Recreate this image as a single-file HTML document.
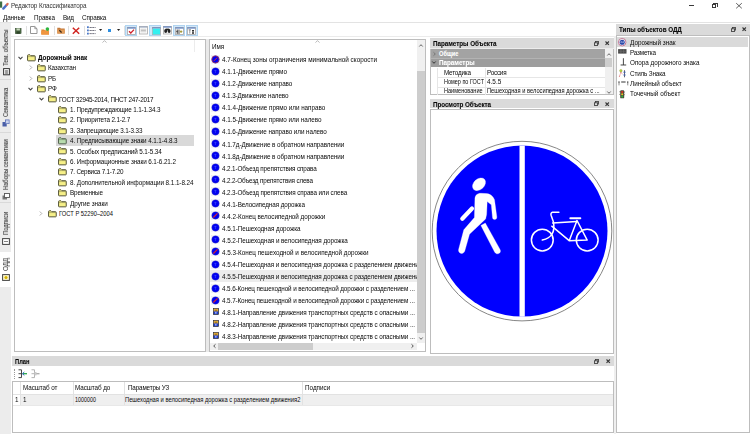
<!DOCTYPE html>
<html><head><meta charset="utf-8">
<style>
*{margin:0;padding:0;box-sizing:border-box}
html,body{width:750px;height:434px;overflow:hidden;background:#fff}
body{position:relative;font-family:"Liberation Sans",sans-serif;font-size:6.2px;color:#0a0a0a}
.a{position:absolute}
.t{position:absolute;white-space:nowrap;line-height:10px;height:10px;will-change:transform}
.b{font-weight:bold;-webkit-text-stroke:0.08px currentColor}
.vt{position:absolute;transform-origin:0 0;transform:rotate(-90deg);white-space:nowrap;line-height:7px;color:#2a2a2a;-webkit-text-stroke:0.05px currentColor;will-change:transform}
svg{overflow:visible}
</style></head><body>
<svg class="a" style="left:0.00px;top:0.00px" width="12" height="12" viewBox="0 0 12 12"><rect x="0" y="1.5" width="2.2" height="6.2" fill="#3f6f45"/><path d="M3.3 8.6 L6.6 5.0" stroke="#4a70c8" stroke-width="2.4" stroke-linecap="round"/><path d="M6.8 4.8 L7.6 3.9" stroke="#d86a50" stroke-width="2.2" stroke-linecap="round"/></svg>
<div class="t" style="left:11.00px;top:1.40px;font-size:6.32px;letter-spacing:-0.113px;color:#333">Редактор Классификатора</div>
<div class="a" style="left:688.70px;top:5.00px;width:5.30px;height:0.90px;background:#3a3a3a;"></div>
<div class="a" style="left:711.8px;top:3.6px;width:4.6px;height:4.2px;border:0.9px solid #3a3a3a"></div>
<div class="a" style="left:713.2px;top:2.5px;width:4.6px;height:4.2px;border-top:0.9px solid #3a3a3a;border-right:0.9px solid #3a3a3a"></div>
<svg class="a" style="left:736.00px;top:2.50px" width="6" height="5.5" viewBox="0 0 6 5.5"><path d="M0.2 0.2L5.8 5.3M5.8 0.2L0.2 5.3" stroke="#3a3a3a" stroke-width="0.8"/></svg>
<div class="t" style="left:3.00px;top:12.60px;font-size:6.32px;letter-spacing:-0.090px">Данные</div>
<div class="t" style="left:33.80px;top:12.60px;font-size:6.32px;letter-spacing:-0.073px">Правка</div>
<div class="t" style="left:63.00px;top:12.60px;font-size:6.32px;letter-spacing:-0.223px">Вид</div>
<div class="t" style="left:82.00px;top:12.60px;font-size:6.32px;letter-spacing:-0.084px">Справка</div>
<div class="a" style="left:0.00px;top:22.00px;width:750.00px;height:1.00px;background:#e3e3e3;"></div>
<div class="a" style="left:11.00px;top:36.30px;width:605.00px;height:0.80px;background:#ebebeb;"></div>
<div class="a" style="left:0.00px;top:23.00px;width:11.00px;height:411.00px;background:#ececec;"></div>
<div class="a" style="left:0.00px;top:251.80px;width:11.00px;height:35.20px;background:#ffffff;"></div>
<div class="vt" style="left:2.0px;top:65.6px;font-size:6.32px;transform:rotate(-90deg) scaleX(0.9256)">Тем. объекты</div>
<div class="vt" style="left:2.0px;top:117.2px;font-size:6.32px;transform:rotate(-90deg) scaleX(0.9051)">Семантика</div>
<div class="vt" style="left:2.0px;top:189.7px;font-size:6.32px;transform:rotate(-90deg) scaleX(0.9098)">Наборы семантики</div>
<div class="vt" style="left:2.0px;top:235.0px;font-size:6.32px;transform:rotate(-90deg) scaleX(0.9225)">Подписи</div>
<div class="vt" style="left:2.0px;top:271.0px;font-size:6.32px;transform:rotate(-90deg) scaleX(0.9747)">ОДД</div>
<div class="a" style="left:0.00px;top:79.00px;width:11.00px;height:0.80px;background:#d9d9d9;"></div>
<div class="a" style="left:0.00px;top:131.70px;width:11.00px;height:0.80px;background:#d9d9d9;"></div>
<div class="a" style="left:0.00px;top:202.40px;width:11.00px;height:0.80px;background:#d9d9d9;"></div>
<svg class="a" style="left:2.60px;top:67.80px" width="7" height="7.4" viewBox="0 0 7 7.4"><rect x="0.6" y="0.6" width="5.8" height="6.2" fill="#fff" stroke="#333" stroke-width="1.0"/><path d="M2.4 2v4.2M3.5 2v4.2M4.6 2v4.2" stroke="#555" stroke-width="0.6"/></svg>
<svg class="a" style="left:2.00px;top:119.30px" width="8" height="8" viewBox="0 0 8 8"><rect x="0.5" y="3" width="4.2" height="4.5" fill="#4a5fa8"/><rect x="3" y="0.5" width="4.5" height="4.5" fill="#5b6fb5"/><rect x="3.8" y="1.3" width="3" height="3" fill="#c9d3ee"/></svg>
<svg class="a" style="left:2.00px;top:192.50px" width="8" height="7" viewBox="0 0 8 7"><rect x="0.5" y="2.5" width="4.5" height="4" fill="#777"/><rect x="2.5" y="0.5" width="5" height="4" fill="#fff" stroke="#555" stroke-width="0.9"/></svg>
<svg class="a" style="left:2.00px;top:238.00px" width="8" height="7" viewBox="0 0 8 7"><rect x="0.6" y="0.6" width="6.8" height="5.8" fill="#fff" stroke="#444" stroke-width="1"/><path d="M2 3.5h4" stroke="#666" stroke-width="0.8"/></svg>
<svg class="a" style="left:1.50px;top:274.00px" width="8" height="7" viewBox="0 0 8 7"><rect x="0.6" y="0.6" width="6.8" height="5.8" fill="#fffbd0" stroke="#444" stroke-width="1"/><circle cx="4" cy="3.5" r="1.6" fill="#d6b400"/></svg>
<svg class="a" style="left:15.00px;top:28.00px" width="6.4" height="6" viewBox="0 0 6.4 6"><rect x="0.3" y="0.3" width="5.8" height="5.4" fill="#4d6b45" stroke="#34492f" stroke-width="0.5"/><rect x="1.5" y="0.4" width="3.4" height="2" fill="#c8d8bc"/><rect x="1.5" y="3.4" width="3.4" height="2.3" fill="#2e4529"/></svg>
<div class="a" style="left:26.10px;top:26.00px;width:0.80px;height:9.00px;background:#e0e0e0;"></div>
<div class="a" style="left:53.90px;top:26.00px;width:0.80px;height:9.00px;background:#e0e0e0;"></div>
<div class="a" style="left:68.30px;top:26.00px;width:0.80px;height:9.00px;background:#e0e0e0;"></div>
<div class="a" style="left:84.30px;top:26.00px;width:0.80px;height:9.00px;background:#e0e0e0;"></div>
<div class="a" style="left:123.60px;top:26.00px;width:0.80px;height:9.00px;background:#e0e0e0;"></div>
<svg class="a" style="left:29.90px;top:26.40px" width="7.5" height="8" viewBox="0 0 7.5 8"><path d="M0.5 0.5H4.8L7 2.7V7.5H0.5Z" fill="#fff" stroke="#8a8a8a" stroke-width="0.9"/><path d="M4.8 0.5V2.7H7" fill="none" stroke="#8a8a8a" stroke-width="0.8"/></svg>
<svg class="a" style="left:41.40px;top:26.50px" width="9" height="8" viewBox="0 0 9 8"><path d="M0.3 2.5H3L3.8 3.3H8V7.6H0.3Z" fill="#e58a35"/><rect x="0.3" y="4" width="7.7" height="3.6" fill="#f0963f"/><circle cx="6.4" cy="2.1" r="1.8" fill="#2fb53e"/></svg>
<svg class="a" style="left:57.00px;top:27.40px" width="8" height="7" viewBox="0 0 8 7"><path d="M0.3 0.8H3L3.8 1.6H7.7V6.6H0.3Z" fill="#c47838"/><rect x="0.3" y="2.6" width="7.4" height="4" fill="#e39c58"/><path d="M2.3 3.3L4.6 5.4" stroke="#3a2a1a" stroke-width="1.3"/></svg>
<svg class="a" style="left:72.00px;top:27.00px" width="8" height="7.5" viewBox="0 0 8 7.5"><path d="M0.8 0.8L7.2 6.7M7.2 0.8L0.8 6.7" stroke="#d0231f" stroke-width="1.5"/></svg>
<svg class="a" style="left:86.80px;top:26.00px" width="9" height="9" viewBox="0 0 9 9"><rect x="0" y="0.3" width="1.8" height="1.8" fill="#4a78c8"/><rect x="0" y="3.5" width="1.8" height="1.8" fill="#4a78c8"/><rect x="0" y="6.7" width="1.8" height="1.8" fill="#4a78c8"/><path d="M2.6 1.5H8.5M2.6 4.5H8.5M2.6 7.6H8.5" stroke="#445" stroke-width="0.9" stroke-dasharray="1.2 0.6"/></svg>
<svg class="a" style="left:98.90px;top:29.20px" width="3.2" height="2" viewBox="0 0 3.2 2"><path d="M0 0H3.2L1.6 2Z" fill="#222"/></svg>
<div class="a" style="left:108.00px;top:29.00px;width:2.80px;height:2.80px;background:#2d8ee0;"></div>
<svg class="a" style="left:116.80px;top:29.20px" width="3.2" height="2" viewBox="0 0 3.2 2"><path d="M0 0H3.2L1.6 2Z" fill="#222"/></svg>
<div class="a" style="left:125.2px;top:25px;width:12.0px;height:10.8px;background:#d2e7f8;border:0.8px solid #b0d4f1"></div>
<div class="a" style="left:149.2px;top:25px;width:11.6px;height:10.8px;background:#d2e7f8;border:0.8px solid #b0d4f1"></div>
<div class="a" style="left:173.2px;top:25px;width:12.2px;height:10.8px;background:#d2e7f8;border:0.8px solid #b0d4f1"></div>
<div class="a" style="left:185.6px;top:25px;width:12.1px;height:10.8px;background:#d2e7f8;border:0.8px solid #b0d4f1"></div>
<svg class="a" style="left:127.20px;top:27.00px" width="8.8" height="7.8" viewBox="0 0 8.8 7.8"><rect x="0.4" y="0.4" width="8.0" height="7.0" fill="#fff" stroke="#a8a8a8" stroke-width="0.8"/><rect x="0.4" y="0.4" width="8.0" height="1.2" fill="#5c7fc0"/><path d="M2 4.2L3.8 6L7 2.6" fill="none" stroke="#d2202a" stroke-width="1.3"/></svg>
<svg class="a" style="left:139.20px;top:26.40px" width="8.8" height="8.4" viewBox="0 0 8.8 8.4"><rect x="0.4" y="0.4" width="8.0" height="7.6" fill="#fff" stroke="#a8a8a8" stroke-width="0.8"/><rect x="0.4" y="0.4" width="8.0" height="1.2" fill="#9aa8c0"/><rect x="1.5" y="2.6" width="5.8" height="3.8" fill="#dcdcdc"/><path d="M2 4.4H6.8" stroke="#aaa" stroke-width="0.6"/></svg>
<svg class="a" style="left:151.60px;top:27.00px" width="8.8" height="7.8" viewBox="0 0 8.8 7.8"><rect x="0.4" y="0.4" width="8.0" height="7.0" fill="#fff" stroke="#a8a8a8" stroke-width="0.8"/><rect x="0.4" y="0.4" width="8.0" height="1.2" fill="#5c7fc0"/><rect x="0.8" y="1.7" width="7.2" height="5.7" fill="#33f0f0"/></svg>
<svg class="a" style="left:163.20px;top:26.40px" width="8.8" height="8.4" viewBox="0 0 8.8 8.4"><rect x="0.4" y="0.4" width="8.0" height="7.6" fill="#fff" stroke="#a8a8a8" stroke-width="0.8"/><rect x="0.4" y="0.4" width="8.0" height="1.2" fill="#5c7fc0"/><ellipse cx="2.7" cy="5.1" rx="1.5" ry="2" fill="#222"/><ellipse cx="6.1" cy="5.1" rx="1.5" ry="2" fill="#222"/><rect x="2.6" y="2.6" width="3.6" height="1.8" fill="#222"/></svg>
<svg class="a" style="left:175.20px;top:27.00px" width="8.8" height="7.8" viewBox="0 0 8.8 7.8"><rect x="0.4" y="0.4" width="8.0" height="7.0" fill="#fff" stroke="#a8a8a8" stroke-width="0.8"/><rect x="0.4" y="0.4" width="8.0" height="1.2" fill="#5c7fc0"/><path d="M2.2 2.5V7M4 2.5V7" stroke="#333" stroke-width="0.9"/><path d="M1 4.5L2.6 3.6V5.4Z" fill="#333"/><circle cx="6.1" cy="4.6" r="1.2" fill="#a79c3a"/></svg>
<svg class="a" style="left:187.40px;top:27.10px" width="8.8" height="7.8" viewBox="0 0 8.8 7.8"><rect x="0.4" y="0.4" width="8.0" height="7.0" fill="#fff" stroke="#a8a8a8" stroke-width="0.8"/><rect x="0.4" y="0.4" width="8.0" height="1.2" fill="#5c7fc0"/><path d="M1.6 2.8H4M2.8 2.8V6.6" stroke="#777" stroke-width="0.8"/><rect x="5" y="3" width="2" height="1.6" fill="#333"/><rect x="5" y="5.2" width="2" height="1.6" fill="#333"/></svg>
<div class="a" style="left:205.20px;top:39.20px;width:4.40px;height:313.00px;background:#e9e9e9;"></div>
<div class="a" style="left:13.60px;top:39.20px;width:192.80px;height:313.00px;border:1px solid #bdbdbd;background:#fff"></div>
<div class="a" style="left:194.00px;top:40.20px;width:0.80px;height:12.00px;background:#ececec;"></div>
<svg class="a" style="left:102.00px;top:40.00px" width="5" height="3" viewBox="0 0 5 3"><path d="M0.5 2.6L2.5 0.6L4.5 2.6" fill="none" stroke="#999" stroke-width="0.7"/></svg>
<div class="a" style="left:55.80px;top:135.10px;width:138.20px;height:10.60px;background:#d9d9d9;"></div>
<svg class="a" style="left:17.50px;top:55.50px" width="5" height="4" viewBox="0 0 5 4"><path d="M0.5 0.9L2.5 2.9L4.5 0.9" fill="none" stroke="#484848" stroke-width="1.1"/></svg>
<svg class="a" style="left:26.50px;top:53.80px" width="8.8" height="7.4" viewBox="0 0 8.8 7.4"><path d="M0.55 1.6Q0.55 0.8 1.3 0.8H3L3.9 1.7H7.6Q8.25 1.7 8.25 2.4V6.2Q8.25 6.85 7.6 6.85H1.2Q0.55 6.85 0.55 6.2Z" fill="#f6f088" stroke="#55553a" stroke-width="1.0" stroke-linejoin="round"/><path d="M0.8 2.6H8" stroke="#55553a" stroke-width="0.4"/></svg>
<div class="t b" style="left:38.10px;top:52.90px;font-size:6.33px">Дорожный знак</div>
<svg class="a" style="left:28.55px;top:65.41px" width="4" height="5" viewBox="0 0 4 5"><path d="M0.8 0.5L2.8 2.5L0.8 4.5" fill="none" stroke="#9a9a9a" stroke-width="0.8"/></svg>
<svg class="a" style="left:37.15px;top:64.21px" width="8.8" height="7.4" viewBox="0 0 8.8 7.4"><path d="M0.55 1.6Q0.55 0.8 1.3 0.8H3L3.9 1.7H7.6Q8.25 1.7 8.25 2.4V6.2Q8.25 6.85 7.6 6.85H1.2Q0.55 6.85 0.55 6.2Z" fill="#f6f088" stroke="#55553a" stroke-width="1.0" stroke-linejoin="round"/><path d="M0.8 2.6H8" stroke="#55553a" stroke-width="0.4"/></svg>
<div class="t" style="left:48.45px;top:63.31px;font-size:6.32px;letter-spacing:-0.193px">Казахстан</div>
<svg class="a" style="left:28.55px;top:75.82px" width="4" height="5" viewBox="0 0 4 5"><path d="M0.8 0.5L2.8 2.5L0.8 4.5" fill="none" stroke="#9a9a9a" stroke-width="0.8"/></svg>
<svg class="a" style="left:37.15px;top:74.62px" width="8.8" height="7.4" viewBox="0 0 8.8 7.4"><path d="M0.55 1.6Q0.55 0.8 1.3 0.8H3L3.9 1.7H7.6Q8.25 1.7 8.25 2.4V6.2Q8.25 6.85 7.6 6.85H1.2Q0.55 6.85 0.55 6.2Z" fill="#f6f088" stroke="#55553a" stroke-width="1.0" stroke-linejoin="round"/><path d="M0.8 2.6H8" stroke="#55553a" stroke-width="0.4"/></svg>
<div class="t" style="left:48.45px;top:73.72px;font-size:6.32px;letter-spacing:-0.212px">РБ</div>
<svg class="a" style="left:28.15px;top:86.73px" width="5" height="4" viewBox="0 0 5 4"><path d="M0.5 0.9L2.5 2.9L4.5 0.9" fill="none" stroke="#484848" stroke-width="1.1"/></svg>
<svg class="a" style="left:37.15px;top:85.03px" width="8.8" height="7.4" viewBox="0 0 8.8 7.4"><path d="M0.55 1.6Q0.55 0.8 1.3 0.8H3L3.9 1.7H7.6Q8.25 1.7 8.25 2.4V6.2Q8.25 6.85 7.6 6.85H1.2Q0.55 6.85 0.55 6.2Z" fill="#f6f088" stroke="#55553a" stroke-width="1.0" stroke-linejoin="round"/><path d="M0.8 2.6H8" stroke="#55553a" stroke-width="0.4"/></svg>
<div class="t" style="left:48.45px;top:84.13px;font-size:6.32px;letter-spacing:-0.227px">РФ</div>
<svg class="a" style="left:38.80px;top:97.14px" width="5" height="4" viewBox="0 0 5 4"><path d="M0.5 0.9L2.5 2.9L4.5 0.9" fill="none" stroke="#484848" stroke-width="1.1"/></svg>
<svg class="a" style="left:47.80px;top:95.44px" width="8.8" height="7.4" viewBox="0 0 8.8 7.4"><path d="M0.55 1.6Q0.55 0.8 1.3 0.8H3L3.9 1.7H7.6Q8.25 1.7 8.25 2.4V6.2Q8.25 6.85 7.6 6.85H1.2Q0.55 6.85 0.55 6.2Z" fill="#f6f088" stroke="#55553a" stroke-width="1.0" stroke-linejoin="round"/><path d="M0.8 2.6H8" stroke="#55553a" stroke-width="0.4"/></svg>
<div class="t" style="left:59.10px;top:94.54px;font-size:6.32px;letter-spacing:-0.218px">ГОСТ 32945-2014, ПНСТ 247-2017</div>
<svg class="a" style="left:58.45px;top:105.85px" width="8.8" height="7.4" viewBox="0 0 8.8 7.4"><path d="M0.55 1.6Q0.55 0.8 1.3 0.8H3L3.9 1.7H7.6Q8.25 1.7 8.25 2.4V6.2Q8.25 6.85 7.6 6.85H1.2Q0.55 6.85 0.55 6.2Z" fill="#f6f088" stroke="#55553a" stroke-width="1.0" stroke-linejoin="round"/><path d="M0.8 2.6H8" stroke="#55553a" stroke-width="0.4"/></svg>
<div class="t" style="left:69.75px;top:104.95px;font-size:6.32px;letter-spacing:-0.134px">1. Предупреждающие 1.1-1.34.3</div>
<svg class="a" style="left:58.45px;top:116.26px" width="8.8" height="7.4" viewBox="0 0 8.8 7.4"><path d="M0.55 1.6Q0.55 0.8 1.3 0.8H3L3.9 1.7H7.6Q8.25 1.7 8.25 2.4V6.2Q8.25 6.85 7.6 6.85H1.2Q0.55 6.85 0.55 6.2Z" fill="#f6f088" stroke="#55553a" stroke-width="1.0" stroke-linejoin="round"/><path d="M0.8 2.6H8" stroke="#55553a" stroke-width="0.4"/></svg>
<div class="t" style="left:69.75px;top:115.36px;font-size:6.32px;letter-spacing:-0.138px">2. Приоритета 2.1-2.7</div>
<svg class="a" style="left:58.45px;top:126.67px" width="8.8" height="7.4" viewBox="0 0 8.8 7.4"><path d="M0.55 1.6Q0.55 0.8 1.3 0.8H3L3.9 1.7H7.6Q8.25 1.7 8.25 2.4V6.2Q8.25 6.85 7.6 6.85H1.2Q0.55 6.85 0.55 6.2Z" fill="#f6f088" stroke="#55553a" stroke-width="1.0" stroke-linejoin="round"/><path d="M0.8 2.6H8" stroke="#55553a" stroke-width="0.4"/></svg>
<div class="t" style="left:69.75px;top:125.77px;font-size:6.32px;letter-spacing:-0.132px">3. Запрещающие  3.1-3.33</div>
<svg class="a" style="left:58.45px;top:137.08px" width="8.8" height="7.4" viewBox="0 0 8.8 7.4"><path d="M0.55 1.6Q0.55 0.8 1.3 0.8H3L3.9 1.7H7.6Q8.25 1.7 8.25 2.4V6.2Q8.25 6.85 7.6 6.85H1.2Q0.55 6.85 0.55 6.2Z" fill="#b8dcae" stroke="#4f5f4c" stroke-width="1.0" stroke-linejoin="round"/><path d="M0.8 2.6H8" stroke="#4f5f4c" stroke-width="0.4"/></svg>
<div class="t" style="left:69.75px;top:136.18px;font-size:6.32px;letter-spacing:-0.085px">4. Предписывающие знаки 4.1.1-4.8.3</div>
<svg class="a" style="left:58.45px;top:147.49px" width="8.8" height="7.4" viewBox="0 0 8.8 7.4"><path d="M0.55 1.6Q0.55 0.8 1.3 0.8H3L3.9 1.7H7.6Q8.25 1.7 8.25 2.4V6.2Q8.25 6.85 7.6 6.85H1.2Q0.55 6.85 0.55 6.2Z" fill="#f6f088" stroke="#55553a" stroke-width="1.0" stroke-linejoin="round"/><path d="M0.8 2.6H8" stroke="#55553a" stroke-width="0.4"/></svg>
<div class="t" style="left:69.75px;top:146.59px;font-size:6.32px;letter-spacing:-0.105px">5. Особых предписаний 5.1-5.34</div>
<svg class="a" style="left:58.45px;top:157.90px" width="8.8" height="7.4" viewBox="0 0 8.8 7.4"><path d="M0.55 1.6Q0.55 0.8 1.3 0.8H3L3.9 1.7H7.6Q8.25 1.7 8.25 2.4V6.2Q8.25 6.85 7.6 6.85H1.2Q0.55 6.85 0.55 6.2Z" fill="#f6f088" stroke="#55553a" stroke-width="1.0" stroke-linejoin="round"/><path d="M0.8 2.6H8" stroke="#55553a" stroke-width="0.4"/></svg>
<div class="t" style="left:69.75px;top:157.00px;font-size:6.32px;letter-spacing:-0.091px">6. Информационные знаки 6.1-6.21.2</div>
<svg class="a" style="left:58.45px;top:168.31px" width="8.8" height="7.4" viewBox="0 0 8.8 7.4"><path d="M0.55 1.6Q0.55 0.8 1.3 0.8H3L3.9 1.7H7.6Q8.25 1.7 8.25 2.4V6.2Q8.25 6.85 7.6 6.85H1.2Q0.55 6.85 0.55 6.2Z" fill="#f6f088" stroke="#55553a" stroke-width="1.0" stroke-linejoin="round"/><path d="M0.8 2.6H8" stroke="#55553a" stroke-width="0.4"/></svg>
<div class="t" style="left:69.75px;top:167.41px;font-size:6.32px;letter-spacing:-0.200px">7. Сервиса 7.1-7.20</div>
<svg class="a" style="left:58.45px;top:178.72px" width="8.8" height="7.4" viewBox="0 0 8.8 7.4"><path d="M0.55 1.6Q0.55 0.8 1.3 0.8H3L3.9 1.7H7.6Q8.25 1.7 8.25 2.4V6.2Q8.25 6.85 7.6 6.85H1.2Q0.55 6.85 0.55 6.2Z" fill="#f6f088" stroke="#55553a" stroke-width="1.0" stroke-linejoin="round"/><path d="M0.8 2.6H8" stroke="#55553a" stroke-width="0.4"/></svg>
<div class="t" style="left:69.75px;top:177.82px;font-size:6.32px;letter-spacing:-0.056px">8. Дополнительной информации 8.1.1-8.24</div>
<svg class="a" style="left:58.45px;top:189.13px" width="8.8" height="7.4" viewBox="0 0 8.8 7.4"><path d="M0.55 1.6Q0.55 0.8 1.3 0.8H3L3.9 1.7H7.6Q8.25 1.7 8.25 2.4V6.2Q8.25 6.85 7.6 6.85H1.2Q0.55 6.85 0.55 6.2Z" fill="#f6f088" stroke="#55553a" stroke-width="1.0" stroke-linejoin="round"/><path d="M0.8 2.6H8" stroke="#55553a" stroke-width="0.4"/></svg>
<div class="t" style="left:69.75px;top:188.23px;font-size:6.32px;letter-spacing:-0.138px">Временные</div>
<svg class="a" style="left:58.45px;top:199.54px" width="8.8" height="7.4" viewBox="0 0 8.8 7.4"><path d="M0.55 1.6Q0.55 0.8 1.3 0.8H3L3.9 1.7H7.6Q8.25 1.7 8.25 2.4V6.2Q8.25 6.85 7.6 6.85H1.2Q0.55 6.85 0.55 6.2Z" fill="#f6f088" stroke="#55553a" stroke-width="1.0" stroke-linejoin="round"/><path d="M0.8 2.6H8" stroke="#55553a" stroke-width="0.4"/></svg>
<div class="t" style="left:69.75px;top:198.64px;font-size:6.32px;letter-spacing:-0.030px">Другие знаки</div>
<svg class="a" style="left:39.20px;top:211.15px" width="4" height="5" viewBox="0 0 4 5"><path d="M0.8 0.5L2.8 2.5L0.8 4.5" fill="none" stroke="#9a9a9a" stroke-width="0.8"/></svg>
<svg class="a" style="left:47.80px;top:209.95px" width="8.8" height="7.4" viewBox="0 0 8.8 7.4"><path d="M0.55 1.6Q0.55 0.8 1.3 0.8H3L3.9 1.7H7.6Q8.25 1.7 8.25 2.4V6.2Q8.25 6.85 7.6 6.85H1.2Q0.55 6.85 0.55 6.2Z" fill="#f6f088" stroke="#55553a" stroke-width="1.0" stroke-linejoin="round"/><path d="M0.8 2.6H8" stroke="#55553a" stroke-width="0.4"/></svg>
<div class="t" style="left:59.10px;top:209.05px;font-size:6.32px;transform:scaleX(0.9146);transform-origin:0 0;will-change:auto">ГОСТ Р 52290–2004</div>
<div class="a" style="left:208.60px;top:39.20px;width:217.80px;height:313.00px;border:1px solid #bdbdbd;background:#fff"></div>
<div class="t" style="left:211.90px;top:42.00px;font-size:6.32px;letter-spacing:-0.078px">Имя</div>
<svg class="a" style="left:315.00px;top:40.00px" width="5" height="3" viewBox="0 0 5 3"><path d="M0.5 2.6L2.5 0.6L4.5 2.6" fill="none" stroke="#999" stroke-width="0.7"/></svg>
<div class="a" style="left:417.00px;top:40.20px;width:8.40px;height:302.60px;background:#f0f0f0;"></div>
<div class="a" style="left:417.20px;top:70.90px;width:8.20px;height:262.40px;background:#cdcdcd;"></div>
<svg class="a" style="left:419.20px;top:43.50px" width="4" height="3" viewBox="0 0 4 3"><path d="M0.3 2.5L2 0.7L3.7 2.5" fill="none" stroke="#555" stroke-width="0.9"/></svg>
<svg class="a" style="left:419.20px;top:336.50px" width="4" height="3" viewBox="0 0 4 3"><path d="M0.3 0.5L2 2.3L3.7 0.5" fill="none" stroke="#555" stroke-width="0.9"/></svg>
<div class="a" style="left:209.60px;top:342.80px;width:207.40px;height:7.60px;background:#f0f0f0;"></div>
<div class="a" style="left:218.30px;top:343.40px;width:94.60px;height:6.60px;background:#cdcdcd;"></div>
<svg class="a" style="left:212.80px;top:344.30px" width="3" height="4" viewBox="0 0 3 4"><path d="M2.5 0.3L0.7 2L2.5 3.7" fill="none" stroke="#444" stroke-width="0.9"/></svg>
<svg class="a" style="left:411.00px;top:344.30px" width="3" height="4" viewBox="0 0 3 4"><path d="M0.5 0.3L2.3 2L0.5 3.7" fill="none" stroke="#444" stroke-width="0.9"/></svg>
<div class="a" style="left:209.60px;top:270.30px;width:207.40px;height:11.70px;background:#ededed;"></div>
<div class="a" style="left:209.6px;top:52px;width:207.3px;height:290.6px;overflow:hidden">
<svg class="a" style="left:1.40px;top:3.00px" width="8.8" height="8.8" viewBox="0 0 8.8 8.8"><rect x="0.4" y="0.3" width="8.2" height="8.2" fill="none" stroke="#e2e2ea" stroke-width="0.4"/><circle cx="4.5" cy="4.4" r="3.75" fill="#0000f0" stroke="#5a5aa8" stroke-width="0.3"/><circle cx="4.4" cy="4.4" r="3.6" fill="none" stroke="#b03050" stroke-width="0.7"/><path d="M2.7 6.1L6.1 2.7" stroke="#e02a2a" stroke-width="1.0"/></svg>
<div class="t" style="left:12.70px;top:3.30px;font-size:6.38px">4.7-Конец зоны ограничения минимальной скорости</div>
<svg class="a" style="left:1.40px;top:15.03px" width="8.8" height="8.8" viewBox="0 0 8.8 8.8"><rect x="0.4" y="0.3" width="8.2" height="8.2" fill="none" stroke="#e2e2ea" stroke-width="0.4"/><circle cx="4.5" cy="4.4" r="3.75" fill="#0000f0" stroke="#5a5aa8" stroke-width="0.3"/><path d="M4.4 6V3.1M3.5 3.9L4.4 2.9L5.3 3.9" stroke="#5060ff" stroke-width="0.5" fill="none"/></svg>
<div class="t" style="left:12.70px;top:15.33px;font-size:6.32px;letter-spacing:-0.026px">4.1.1-Движение прямо</div>
<svg class="a" style="left:1.40px;top:27.06px" width="8.8" height="8.8" viewBox="0 0 8.8 8.8"><rect x="0.4" y="0.3" width="8.2" height="8.2" fill="none" stroke="#e2e2ea" stroke-width="0.4"/><circle cx="4.5" cy="4.4" r="3.75" fill="#0000f0" stroke="#5a5aa8" stroke-width="0.3"/><path d="M4.4 6V3.1M3.5 3.9L4.4 2.9L5.3 3.9" stroke="#5060ff" stroke-width="0.5" fill="none"/></svg>
<div class="t" style="left:12.70px;top:27.36px;font-size:6.32px;letter-spacing:-0.057px">4.1.2-Движение направо</div>
<svg class="a" style="left:1.40px;top:39.09px" width="8.8" height="8.8" viewBox="0 0 8.8 8.8"><rect x="0.4" y="0.3" width="8.2" height="8.2" fill="none" stroke="#e2e2ea" stroke-width="0.4"/><circle cx="4.5" cy="4.4" r="3.75" fill="#0000f0" stroke="#5a5aa8" stroke-width="0.3"/><path d="M4.4 6V3.1M3.5 3.9L4.4 2.9L5.3 3.9" stroke="#5060ff" stroke-width="0.5" fill="none"/></svg>
<div class="t" style="left:12.70px;top:39.39px;font-size:6.32px;letter-spacing:-0.088px">4.1.3-Движение налево</div>
<svg class="a" style="left:1.40px;top:51.12px" width="8.8" height="8.8" viewBox="0 0 8.8 8.8"><rect x="0.4" y="0.3" width="8.2" height="8.2" fill="none" stroke="#e2e2ea" stroke-width="0.4"/><circle cx="4.5" cy="4.4" r="3.75" fill="#0000f0" stroke="#5a5aa8" stroke-width="0.3"/><path d="M4.4 6V3.1M3.5 3.9L4.4 2.9L5.3 3.9" stroke="#5060ff" stroke-width="0.5" fill="none"/></svg>
<div class="t" style="left:12.70px;top:51.42px;font-size:6.32px;letter-spacing:-0.021px">4.1.4-Движение прямо или направо</div>
<svg class="a" style="left:1.40px;top:63.15px" width="8.8" height="8.8" viewBox="0 0 8.8 8.8"><rect x="0.4" y="0.3" width="8.2" height="8.2" fill="none" stroke="#e2e2ea" stroke-width="0.4"/><circle cx="4.5" cy="4.4" r="3.75" fill="#0000f0" stroke="#5a5aa8" stroke-width="0.3"/><path d="M4.4 6V3.1M3.5 3.9L4.4 2.9L5.3 3.9" stroke="#5060ff" stroke-width="0.5" fill="none"/></svg>
<div class="t" style="left:12.70px;top:63.45px;font-size:6.32px;letter-spacing:-0.036px">4.1.5-Движение прямо или налево</div>
<svg class="a" style="left:1.40px;top:75.18px" width="8.8" height="8.8" viewBox="0 0 8.8 8.8"><rect x="0.4" y="0.3" width="8.2" height="8.2" fill="none" stroke="#e2e2ea" stroke-width="0.4"/><circle cx="4.5" cy="4.4" r="3.75" fill="#0000f0" stroke="#5a5aa8" stroke-width="0.3"/><path d="M4.4 6V3.1M3.5 3.9L4.4 2.9L5.3 3.9" stroke="#5060ff" stroke-width="0.5" fill="none"/></svg>
<div class="t" style="left:12.70px;top:75.48px;font-size:6.32px;letter-spacing:-0.062px">4.1.6-Движение направо или налево</div>
<svg class="a" style="left:1.40px;top:87.21px" width="8.8" height="8.8" viewBox="0 0 8.8 8.8"><rect x="0.4" y="0.3" width="8.2" height="8.2" fill="none" stroke="#e2e2ea" stroke-width="0.4"/><circle cx="4.5" cy="4.4" r="3.75" fill="#0000f0" stroke="#5a5aa8" stroke-width="0.3"/><path d="M4.4 6V3.1M3.5 3.9L4.4 2.9L5.3 3.9" stroke="#5060ff" stroke-width="0.5" fill="none"/></svg>
<div class="t" style="left:12.70px;top:87.51px;font-size:6.32px;letter-spacing:-0.057px">4.1.7д-Движение в обратном направлении</div>
<svg class="a" style="left:1.40px;top:99.24px" width="8.8" height="8.8" viewBox="0 0 8.8 8.8"><rect x="0.4" y="0.3" width="8.2" height="8.2" fill="none" stroke="#e2e2ea" stroke-width="0.4"/><circle cx="4.5" cy="4.4" r="3.75" fill="#0000f0" stroke="#5a5aa8" stroke-width="0.3"/><path d="M4.4 6V3.1M3.5 3.9L4.4 2.9L5.3 3.9" stroke="#5060ff" stroke-width="0.5" fill="none"/></svg>
<div class="t" style="left:12.70px;top:99.54px;font-size:6.32px;letter-spacing:-0.057px">4.1.8д-Движение в обратном направлении</div>
<svg class="a" style="left:1.40px;top:111.27px" width="8.8" height="8.8" viewBox="0 0 8.8 8.8"><rect x="0.4" y="0.3" width="8.2" height="8.2" fill="none" stroke="#e2e2ea" stroke-width="0.4"/><circle cx="4.5" cy="4.4" r="3.75" fill="#0000f0" stroke="#5a5aa8" stroke-width="0.3"/><path d="M4.4 6V3.1M3.5 3.9L4.4 2.9L5.3 3.9" stroke="#5060ff" stroke-width="0.5" fill="none"/></svg>
<div class="t" style="left:12.70px;top:111.57px;font-size:6.32px;letter-spacing:-0.126px">4.2.1-Объезд препятствия справа</div>
<svg class="a" style="left:1.40px;top:123.30px" width="8.8" height="8.8" viewBox="0 0 8.8 8.8"><rect x="0.4" y="0.3" width="8.2" height="8.2" fill="none" stroke="#e2e2ea" stroke-width="0.4"/><circle cx="4.5" cy="4.4" r="3.75" fill="#0000f0" stroke="#5a5aa8" stroke-width="0.3"/><path d="M4.4 6V3.1M3.5 3.9L4.4 2.9L5.3 3.9" stroke="#5060ff" stroke-width="0.5" fill="none"/></svg>
<div class="t" style="left:12.70px;top:123.60px;font-size:6.32px;letter-spacing:-0.151px">4.2.2-Объезд препятствия слева</div>
<svg class="a" style="left:1.40px;top:135.33px" width="8.8" height="8.8" viewBox="0 0 8.8 8.8"><rect x="0.4" y="0.3" width="8.2" height="8.2" fill="none" stroke="#e2e2ea" stroke-width="0.4"/><circle cx="4.5" cy="4.4" r="3.75" fill="#0000f0" stroke="#5a5aa8" stroke-width="0.3"/><path d="M4.4 6V3.1M3.5 3.9L4.4 2.9L5.3 3.9" stroke="#5060ff" stroke-width="0.5" fill="none"/></svg>
<div class="t" style="left:12.70px;top:135.63px;font-size:6.32px;letter-spacing:-0.120px">4.2.3-Объезд препятствия справа или слева</div>
<svg class="a" style="left:1.40px;top:147.36px" width="8.8" height="8.8" viewBox="0 0 8.8 8.8"><rect x="0.4" y="0.3" width="8.2" height="8.2" fill="none" stroke="#e2e2ea" stroke-width="0.4"/><circle cx="4.5" cy="4.4" r="3.75" fill="#0000f0" stroke="#5a5aa8" stroke-width="0.3"/><path d="M4.4 6V3.1M3.5 3.9L4.4 2.9L5.3 3.9" stroke="#5060ff" stroke-width="0.5" fill="none"/></svg>
<div class="t" style="left:12.70px;top:147.66px;font-size:6.32px;letter-spacing:-0.083px">4.4.1-Велосипедная дорожка</div>
<svg class="a" style="left:1.40px;top:159.39px" width="8.8" height="8.8" viewBox="0 0 8.8 8.8"><rect x="0.4" y="0.3" width="8.2" height="8.2" fill="none" stroke="#e2e2ea" stroke-width="0.4"/><circle cx="4.5" cy="4.4" r="3.75" fill="#0000f0" stroke="#5a5aa8" stroke-width="0.3"/><path d="M2.3 6.5L6.5 2.3" stroke="#d8202a" stroke-width="1.1"/></svg>
<div class="t" style="left:12.70px;top:159.69px;font-size:6.32px;letter-spacing:-0.015px">4.4.2-Конец велосипедной дорожки</div>
<svg class="a" style="left:1.40px;top:171.42px" width="8.8" height="8.8" viewBox="0 0 8.8 8.8"><rect x="0.4" y="0.3" width="8.2" height="8.2" fill="none" stroke="#e2e2ea" stroke-width="0.4"/><circle cx="4.5" cy="4.4" r="3.75" fill="#0000f0" stroke="#5a5aa8" stroke-width="0.3"/><path d="M4.4 6V3.1M3.5 3.9L4.4 2.9L5.3 3.9" stroke="#5060ff" stroke-width="0.5" fill="none"/></svg>
<div class="t" style="left:12.70px;top:171.72px;font-size:6.32px;letter-spacing:-0.053px">4.5.1-Пешеходная дорожка</div>
<svg class="a" style="left:1.40px;top:183.45px" width="8.8" height="8.8" viewBox="0 0 8.8 8.8"><rect x="0.4" y="0.3" width="8.2" height="8.2" fill="none" stroke="#e2e2ea" stroke-width="0.4"/><circle cx="4.5" cy="4.4" r="3.75" fill="#0000f0" stroke="#5a5aa8" stroke-width="0.3"/><path d="M4.4 6V3.1M3.5 3.9L4.4 2.9L5.3 3.9" stroke="#5060ff" stroke-width="0.5" fill="none"/></svg>
<div class="t" style="left:12.70px;top:183.75px;font-size:6.32px;letter-spacing:-0.062px">4.5.2-Пешеходная и велосипедная дорожка</div>
<svg class="a" style="left:1.40px;top:195.48px" width="8.8" height="8.8" viewBox="0 0 8.8 8.8"><rect x="0.4" y="0.3" width="8.2" height="8.2" fill="none" stroke="#e2e2ea" stroke-width="0.4"/><circle cx="4.5" cy="4.4" r="3.75" fill="#0000f0" stroke="#5a5aa8" stroke-width="0.3"/><path d="M2.3 6.5L6.5 2.3" stroke="#d8202a" stroke-width="1.1"/></svg>
<div class="t" style="left:12.70px;top:195.78px;font-size:6.32px;letter-spacing:-0.005px">4.5.3-Конец пешеходной и велосипедной дорожки</div>
<svg class="a" style="left:1.40px;top:207.51px" width="8.8" height="8.8" viewBox="0 0 8.8 8.8"><rect x="0.4" y="0.3" width="8.2" height="8.2" fill="none" stroke="#e2e2ea" stroke-width="0.4"/><circle cx="4.5" cy="4.4" r="3.75" fill="#0000f0" stroke="#5a5aa8" stroke-width="0.3"/><path d="M4.4 6V3.1M3.5 3.9L4.4 2.9L5.3 3.9" stroke="#5060ff" stroke-width="0.5" fill="none"/></svg>
<div class="t" style="left:12.70px;top:207.81px;font-size:6.32px;letter-spacing:-0.063px">4.5.4-Пешеходная и велосипедная дорожка с разделением движения</div>
<svg class="a" style="left:1.40px;top:219.54px" width="8.8" height="8.8" viewBox="0 0 8.8 8.8"><rect x="0.4" y="0.3" width="8.2" height="8.2" fill="none" stroke="#e2e2ea" stroke-width="0.4"/><circle cx="4.5" cy="4.4" r="3.75" fill="#0000f0" stroke="#5a5aa8" stroke-width="0.3"/><path d="M4.4 6V3.1M3.5 3.9L4.4 2.9L5.3 3.9" stroke="#5060ff" stroke-width="0.5" fill="none"/></svg>
<div class="t" style="left:12.70px;top:219.84px;font-size:6.32px;letter-spacing:-0.063px">4.5.5-Пешеходная и велосипедная дорожка с разделением движения</div>
<svg class="a" style="left:1.40px;top:231.57px" width="8.8" height="8.8" viewBox="0 0 8.8 8.8"><rect x="0.4" y="0.3" width="8.2" height="8.2" fill="none" stroke="#e2e2ea" stroke-width="0.4"/><circle cx="4.5" cy="4.4" r="3.75" fill="#0000f0" stroke="#5a5aa8" stroke-width="0.3"/><path d="M4.4 6V3.1M3.5 3.9L4.4 2.9L5.3 3.9" stroke="#5060ff" stroke-width="0.5" fill="none"/></svg>
<div class="t" style="left:12.70px;top:231.87px;font-size:6.32px;letter-spacing:-0.100px">4.5.6-Конец пешеходной и велосипедной дорожки с разделением ...</div>
<svg class="a" style="left:1.40px;top:243.60px" width="8.8" height="8.8" viewBox="0 0 8.8 8.8"><rect x="0.4" y="0.3" width="8.2" height="8.2" fill="none" stroke="#e2e2ea" stroke-width="0.4"/><circle cx="4.5" cy="4.4" r="3.75" fill="#0000f0" stroke="#5a5aa8" stroke-width="0.3"/><path d="M2.3 6.5L6.5 2.3" stroke="#d8202a" stroke-width="1.1"/></svg>
<div class="t" style="left:12.70px;top:243.90px;font-size:6.32px;letter-spacing:-0.100px">4.5.7-Конец пешеходной и велосипедной дорожки с разделением ...</div>
<svg class="a" style="left:3.00px;top:256.43px" width="5.8" height="6.8" viewBox="0 0 5.8 6.8"><rect x="0.35" y="0.35" width="5.1" height="6.1" fill="#1f3fd0" stroke="#2a2a2a" stroke-width="0.7"/><rect x="0.7" y="0.7" width="4.4" height="2.7" fill="#e6b038"/><path d="M1.6 2.3H4.2" stroke="#5a4010" stroke-width="0.6"/><path d="M2.9 3.9V5.6" stroke="#fff" stroke-width="0.9"/></svg>
<div class="t" style="left:12.70px;top:255.93px;font-size:6.32px;letter-spacing:-0.060px">4.8.1-Направление движения транспортных средств с опасными ...</div>
<svg class="a" style="left:3.00px;top:268.46px" width="5.8" height="6.8" viewBox="0 0 5.8 6.8"><rect x="0.35" y="0.35" width="5.1" height="6.1" fill="#1f3fd0" stroke="#2a2a2a" stroke-width="0.7"/><rect x="0.7" y="0.7" width="4.4" height="2.7" fill="#e6b038"/><path d="M1.6 2.3H4.2" stroke="#5a4010" stroke-width="0.6"/><path d="M2.9 3.9V5.6" stroke="#fff" stroke-width="0.9"/></svg>
<div class="t" style="left:12.70px;top:267.96px;font-size:6.32px;letter-spacing:-0.060px">4.8.2-Направление движения транспортных средств с опасными ...</div>
<svg class="a" style="left:3.00px;top:280.49px" width="5.8" height="6.8" viewBox="0 0 5.8 6.8"><rect x="0.35" y="0.35" width="5.1" height="6.1" fill="#1f3fd0" stroke="#2a2a2a" stroke-width="0.7"/><rect x="0.7" y="0.7" width="4.4" height="2.7" fill="#e6b038"/><path d="M1.6 2.3H4.2" stroke="#5a4010" stroke-width="0.6"/><path d="M2.9 3.9V5.6" stroke="#fff" stroke-width="0.9"/></svg>
<div class="t" style="left:12.70px;top:279.99px;font-size:6.32px;letter-spacing:-0.060px">4.8.3-Направление движения транспортных средств с опасными ...</div>
</div>
<div class="a" style="left:430.40px;top:38.00px;width:183.60px;height:10.40px;background:#dadada;"></div>
<div class="t b" style="left:433.30px;top:39.00px;font-size:6.32px;letter-spacing:-0.042px">Параметры Объекта</div>
<svg class="a" style="left:594.00px;top:40.80px" width="5" height="5" viewBox="0 0 5 5"><rect x="1.4" y="0.5" width="3.1" height="2.6" fill="none" stroke="#3a3a3a" stroke-width="0.85"/><rect x="0.5" y="1.8" width="3.1" height="2.7" fill="#dadada" stroke="#3a3a3a" stroke-width="0.85"/></svg>
<svg class="a" style="left:605.20px;top:41.10px" width="4.4" height="4.4" viewBox="0 0 4.4 4.4"><path d="M0.5 0.5L3.9 3.9M3.9 0.5L0.5 3.9" stroke="#3a3a3a" stroke-width="1.15"/></svg>
<div class="a" style="left:430.40px;top:48.20px;width:183.60px;height:47.20px;border:1px solid #bdbdbd;background:#fff"></div>
<div class="a" style="left:430.40px;top:48.20px;width:183.60px;height:1.10px;background:#ececec;"></div>
<div class="a" style="left:431.40px;top:49.40px;width:173.40px;height:8.80px;background:#a3a3a3;"></div>
<div class="a" style="left:431.40px;top:58.20px;width:173.40px;height:9.20px;background:#9d9d9d;"></div>
<div class="a" style="left:431.40px;top:57.90px;width:173.40px;height:0.60px;background:#b3b3b3;"></div>
<div class="t b" style="left:438.80px;top:49.00px;font-size:6.32px;transform:scaleX(0.9003);transform-origin:0 0;will-change:auto;color:#fff">Общие</div>
<div class="t b" style="left:438.80px;top:58.30px;font-size:6.32px;letter-spacing:-0.032px;color:#fff">Параметры</div>
<svg class="a" style="left:432.60px;top:51.50px" width="3" height="4" viewBox="0 0 3 4"><path d="M0.5 0.3L2.3 2L0.5 3.7" fill="none" stroke="#6a6a6a" stroke-width="0.8"/></svg>
<svg class="a" style="left:432.00px;top:61.20px" width="4" height="3" viewBox="0 0 4 3"><path d="M0.3 0.5L2 2.3L3.7 0.5" fill="none" stroke="#2a2a2a" stroke-width="0.9"/></svg>
<div class="a" style="left:437.00px;top:77.20px;width:167.80px;height:0.80px;background:#e6e6e6;"></div>
<div class="a" style="left:437.00px;top:86.80px;width:167.80px;height:0.80px;background:#e6e6e6;"></div>
<div class="a" style="left:485.40px;top:67.60px;width:0.80px;height:27.80px;background:#e6e6e6;"></div>
<div class="a" style="left:437.00px;top:67.60px;width:0.80px;height:27.80px;background:#e6e6e6;"></div>
<div class="t" style="left:444.40px;top:67.80px;font-size:6.32px;letter-spacing:-0.220px">Методика</div>
<div class="t" style="left:487.20px;top:67.80px;font-size:6.32px;letter-spacing:-0.230px">Россия</div>
<div class="t" style="left:444.40px;top:77.40px;font-size:6.32px;transform:scaleX(0.8687);transform-origin:0 0;will-change:auto">Номер по ГОСТ</div>
<div class="t" style="left:487.20px;top:77.40px;font-size:6.40px">4.5.5</div>
<div class="t" style="left:444.40px;top:86.20px;font-size:6.32px;transform:scaleX(0.8829);transform-origin:0 0;will-change:auto">Наименование</div>
<div class="t" style="left:487.20px;top:86.20px;font-size:6.32px;transform:scaleX(0.9082);transform-origin:0 0;will-change:auto">Пешеходная и велосипедная дорожка с ...</div>
<div class="a" style="left:604.80px;top:49.40px;width:8.20px;height:45.00px;background:#f0f0f0;"></div>
<div class="a" style="left:605.30px;top:58.40px;width:7.20px;height:8.80px;background:#cdcdcd;"></div>
<svg class="a" style="left:607.00px;top:53.00px" width="4" height="3" viewBox="0 0 4 3"><path d="M0.3 2.5L2 0.7L3.7 2.5" fill="none" stroke="#555" stroke-width="0.9"/></svg>
<svg class="a" style="left:607.00px;top:90.50px" width="4" height="3" viewBox="0 0 4 3"><path d="M0.3 0.5L2 2.3L3.7 0.5" fill="none" stroke="#555" stroke-width="0.9"/></svg>
<div class="a" style="left:430.40px;top:98.90px;width:183.60px;height:9.30px;background:#dadada;"></div>
<div class="t b" style="left:433.30px;top:99.70px;font-size:6.32px;letter-spacing:-0.076px">Просмотр Объекта</div>
<svg class="a" style="left:594.00px;top:101.30px" width="5" height="5" viewBox="0 0 5 5"><rect x="1.4" y="0.5" width="3.1" height="2.6" fill="none" stroke="#3a3a3a" stroke-width="0.85"/><rect x="0.5" y="1.8" width="3.1" height="2.7" fill="#dadada" stroke="#3a3a3a" stroke-width="0.85"/></svg>
<svg class="a" style="left:605.20px;top:101.60px" width="4.4" height="4.4" viewBox="0 0 4.4 4.4"><path d="M0.5 0.5L3.9 3.9M3.9 0.5L0.5 3.9" stroke="#3a3a3a" stroke-width="1.15"/></svg>
<div class="a" style="left:430.20px;top:109.30px;width:184.00px;height:244.30px;border:1px solid #bdbdbd;background:#fff"></div>
<svg class="a" style="left:430px;top:130px" width="184" height="200" viewBox="430 130 184 200">
<defs><clipPath id="inner"><circle cx="522" cy="231.1" r="85.6"/></clipPath></defs>
<circle cx="522" cy="231.1" r="89.8" fill="#fff" stroke="#707070" stroke-width="0.85"/>
<circle cx="522" cy="231.1" r="85.5" fill="#0000ff"/>
<rect x="519.5" y="138" width="5.3" height="186" fill="#fff" clip-path="url(#inner)"/>
<g fill="#fff" stroke="#fff" stroke-width="0.3" stroke-linejoin="round">
<ellipse cx="479" cy="184.3" rx="7.4" ry="5.3" transform="rotate(-42 479 184.3)"/>
<path d="M474.9 199.5 C474.9 195.5 477 193.3 481 193.3 L486.5 193.6 C489 193.8 491.5 195 493.3 197.5 L494.5 199.8 L496.8 216.8 C497 218.6 496 219.6 494.7 219.6 C493.4 219.6 492.6 218.8 492.5 217.6 L491.3 204.8 L487.2 201.6 L486.6 214.5 L485.6 219 L469.5 234.2 L464.9 250.6 C464.4 252.7 462.9 253.7 461.2 253.4 C459.3 253 458.2 251.4 458.6 249.4 L463.8 229.8 L474.4 217.6 Z"/>
<path d="M480.9 225.5 L485.3 223 L500 249.4 C501 251.3 500.3 253 498.6 253.6 C497 254.2 495.5 253.6 494.6 252 Z"/>
</g>
<path d="M472 208.5 L462.3 218.7" stroke="#fff" stroke-width="4.2" stroke-linecap="round"/>
<g fill="none" stroke="#fff" stroke-width="1.5" stroke-linecap="round" stroke-linejoin="round">
<circle cx="542.3" cy="240.1" r="10.9"/>
<circle cx="587.2" cy="240.1" r="10.9"/>
<path d="M558.9 212.2 L552.6 212.2 Q550.4 212.7 551.1 215.3 L553.3 221.5 Q556.5 237 542.3 240.1"/>
<path d="M552.7 223 L576.8 221.6"/>
<path d="M551.8 226.2 L569.2 240.7 L587.2 240.1 L577 220.5 L569.2 240.7"/>
<path d="M570.3 218.3 L580.3 218.3" stroke-width="2"/>
</g>
</svg>
<div class="a" style="left:615.80px;top:24.00px;width:134.00px;height:10.50px;background:#dadada;"></div>
<div class="t b" style="left:619.30px;top:24.60px;font-size:6.32px;letter-spacing:-0.053px">Типы объектов ОДД</div>
<svg class="a" style="left:730.60px;top:26.70px" width="5" height="5" viewBox="0 0 5 5"><rect x="1.4" y="0.5" width="3.1" height="2.6" fill="none" stroke="#3a3a3a" stroke-width="0.85"/><rect x="0.5" y="1.8" width="3.1" height="2.7" fill="#dadada" stroke="#3a3a3a" stroke-width="0.85"/></svg>
<svg class="a" style="left:741.80px;top:27.00px" width="4.4" height="4.4" viewBox="0 0 4.4 4.4"><path d="M0.5 0.5L3.9 3.9M3.9 0.5L0.5 3.9" stroke="#3a3a3a" stroke-width="1.15"/></svg>
<div class="a" style="left:614.20px;top:36.00px;width:1.60px;height:398.00px;background:#efefef;"></div>
<div class="a" style="left:615.80px;top:34.60px;width:134.00px;height:398.80px;border:1px solid #bdbdbd;background:#fff"></div>
<div class="a" style="left:616.80px;top:36.70px;width:131.40px;height:10.20px;background:#dadada;"></div>
<svg class="a" style="left:618.30px;top:37.90px" width="8.4" height="8.4" viewBox="0 0 8.4 8.4"><circle cx="4.2" cy="4.2" r="3.75" fill="#fff" stroke="#b85a80" stroke-width="0.8"/><circle cx="4.2" cy="4.2" r="2.55" fill="#2a48a8"/><path d="M3 5V3.5L4.2 4.4L5.4 3.5V5" stroke="#e8ecff" stroke-width="0.5" fill="none"/></svg>
<svg class="a" style="left:618.30px;top:49.30px" width="8.6" height="4.8" viewBox="0 0 8.6 4.8"><rect x="0.1" y="0.1" width="8.4" height="4.5" fill="#4a4a4a"/><path d="M2.9 0.1V4.6M5.7 0.1V4.6" stroke="#8a8a8a" stroke-width="0.45"/><path d="M0.1 2.35H8.5" stroke="#777" stroke-width="0.4"/></svg>
<svg class="a" style="left:619.80px;top:57.60px" width="6.8" height="7.6" viewBox="0 0 6.8 7.6"><path d="M3.4 0.2V7M0.6 7H6.2" stroke="#333" stroke-width="0.9"/></svg>
<svg class="a" style="left:618.20px;top:69.00px" width="9" height="9" viewBox="0 0 9 9"><circle cx="2.9" cy="1.7" r="1.3" fill="#b8d040" stroke="#7a9020" stroke-width="0.3"/><path d="M2.9 3.2L1.2 8.2" stroke="#d04040" stroke-width="0.7" stroke-dasharray="0.9 0.5"/><path d="M2.9 3.2L4.6 5.5" stroke="#d04040" stroke-width="0.6" stroke-dasharray="0.8 0.5"/><path d="M6.5 1.2V8.3" stroke="#3a3a50" stroke-width="0.8"/><path d="M5.3 3.2H7.7M5.3 6H7.7" stroke="#3060c0" stroke-width="0.8"/></svg>
<svg class="a" style="left:617.80px;top:81.20px" width="11" height="4.6" viewBox="0 0 11 4.6"><path d="M1 0.3V2.6M9.8 0.3V2.6" stroke="#333" stroke-width="1.0"/><circle cx="1" cy="3.8" r="0.5" fill="#333"/><circle cx="9.8" cy="3.8" r="0.5" fill="#333"/><path d="M3.2 1.0H7.6" stroke="#444" stroke-width="1.1"/></svg>
<svg class="a" style="left:619.40px;top:89.60px" width="6.4" height="8.6" viewBox="0 0 6.4 8.6"><rect x="1.2" y="0.3" width="4" height="8" rx="0.9" fill="#4a4a3a"/><path d="M0.3 1.6L1.2 2.4M6.1 1.6L5.2 2.4M0.3 4.2L1.2 5M6.1 4.2L5.2 5" stroke="#4a4a3a" stroke-width="0.7"/><circle cx="3.2" cy="2" r="1.05" fill="#e03020"/><circle cx="3.2" cy="4.3" r="1.05" fill="#e8c020"/><circle cx="3.2" cy="6.6" r="1.05" fill="#30b040"/></svg>
<div class="t" style="left:630.20px;top:37.80px;font-size:6.40px">Дорожный знак</div>
<div class="t" style="left:630.20px;top:48.12px;font-size:6.32px;letter-spacing:-0.189px">Разметка</div>
<div class="t" style="left:630.20px;top:58.44px;font-size:6.32px;letter-spacing:-0.011px">Опора дорожного знака</div>
<div class="t" style="left:630.20px;top:68.76px;font-size:6.32px;letter-spacing:-0.144px">Стиль Знака</div>
<div class="t" style="left:630.20px;top:79.08px;font-size:6.33px">Линейный объект</div>
<div class="t" style="left:630.20px;top:89.40px;font-size:6.37px">Точечный объект</div>
<div class="a" style="left:12.00px;top:356.20px;width:602.00px;height:9.80px;background:#dadada;"></div>
<div class="t b" style="left:14.80px;top:356.70px;font-size:6.32px;transform:scaleX(0.9130);transform-origin:0 0;will-change:auto">План</div>
<svg class="a" style="left:594.40px;top:358.90px" width="5" height="5" viewBox="0 0 5 5"><rect x="1.4" y="0.5" width="3.1" height="2.6" fill="none" stroke="#3a3a3a" stroke-width="0.85"/><rect x="0.5" y="1.8" width="3.1" height="2.7" fill="#dadada" stroke="#3a3a3a" stroke-width="0.85"/></svg>
<svg class="a" style="left:605.60px;top:359.20px" width="4.4" height="4.4" viewBox="0 0 4.4 4.4"><path d="M0.5 0.5L3.9 3.9M3.9 0.5L0.5 3.9" stroke="#3a3a3a" stroke-width="1.15"/></svg>
<div class="a" style="left:14.4px;top:369px;width:1px;height:9.5px;border-left:1px dotted #9a9a9a"></div>
<svg class="a" style="left:18.30px;top:369.20px" width="9.5" height="9.5" viewBox="0 0 9.5 9.5"><path d="M0.5 0.8H3.5V8.6H0.5M0.5 4.7H3.5" stroke="#333" stroke-width="0.9" fill="none"/><path d="M4.5 4.7H9" stroke="#2aa848" stroke-width="1.3"/><path d="M6.3 3L4.5 4.7L6.3 6.4" stroke="#2a5cc8" stroke-width="1" fill="none"/></svg>
<svg class="a" style="left:30.70px;top:369.20px" width="9" height="9.5" viewBox="0 0 9 9.5"><path d="M0.5 0.8H3.5V8.6H0.5M0.5 4.7H3.5" stroke="#aaa" stroke-width="0.9" fill="none"/><path d="M3.5 4.7H8.5" stroke="#aaa" stroke-width="1.3"/><rect x="3.5" y="3" width="2" height="3.4" fill="#ccc"/></svg>
<div class="a" style="left:12.00px;top:380.80px;width:602.00px;height:52.40px;border:1px solid #bdbdbd;background:#fff"></div>
<div class="a" style="left:20.40px;top:394.20px;width:592.60px;height:10.80px;background:#efefef;"></div>
<div class="a" style="left:20.40px;top:382.00px;width:0.80px;height:23.00px;background:#e2e2e2;"></div>
<div class="a" style="left:72.80px;top:382.00px;width:0.80px;height:23.00px;background:#e2e2e2;"></div>
<div class="a" style="left:124.20px;top:382.00px;width:0.80px;height:23.00px;background:#e2e2e2;"></div>
<div class="a" style="left:302.40px;top:382.00px;width:0.80px;height:23.00px;background:#e2e2e2;"></div>
<div class="a" style="left:13.00px;top:393.60px;width:600.00px;height:0.80px;background:#e2e2e2;"></div>
<div class="a" style="left:13.00px;top:405.00px;width:600.00px;height:0.80px;background:#e8e8e8;"></div>
<div class="t" style="left:22.70px;top:383.40px;font-size:6.32px;letter-spacing:-0.078px">Масштаб от</div>
<div class="t" style="left:74.70px;top:383.40px;font-size:6.32px;letter-spacing:-0.068px">Масштаб до</div>
<div class="t" style="left:127.60px;top:383.40px;font-size:6.32px;letter-spacing:-0.171px">Параметры УЗ</div>
<div class="t" style="left:304.80px;top:383.40px;font-size:6.32px;letter-spacing:-0.006px">Подписи</div>
<div class="t" style="left:15.30px;top:395.10px;font-size:6.32px;letter-spacing:-0.067px">1</div>
<div class="t" style="left:22.70px;top:395.10px;font-size:6.32px;letter-spacing:-0.067px">1</div>
<div class="t" style="left:74.70px;top:395.10px;font-size:6.32px;transform:scaleX(0.8544);transform-origin:0 0;will-change:auto">1000000</div>
<div class="t" style="left:125.20px;top:395.10px;font-size:6.32px;transform:scaleX(0.9161);transform-origin:0 0;will-change:auto">Пешеходная и велосипедная дорожка с разделением движения2</div>
</body></html>
